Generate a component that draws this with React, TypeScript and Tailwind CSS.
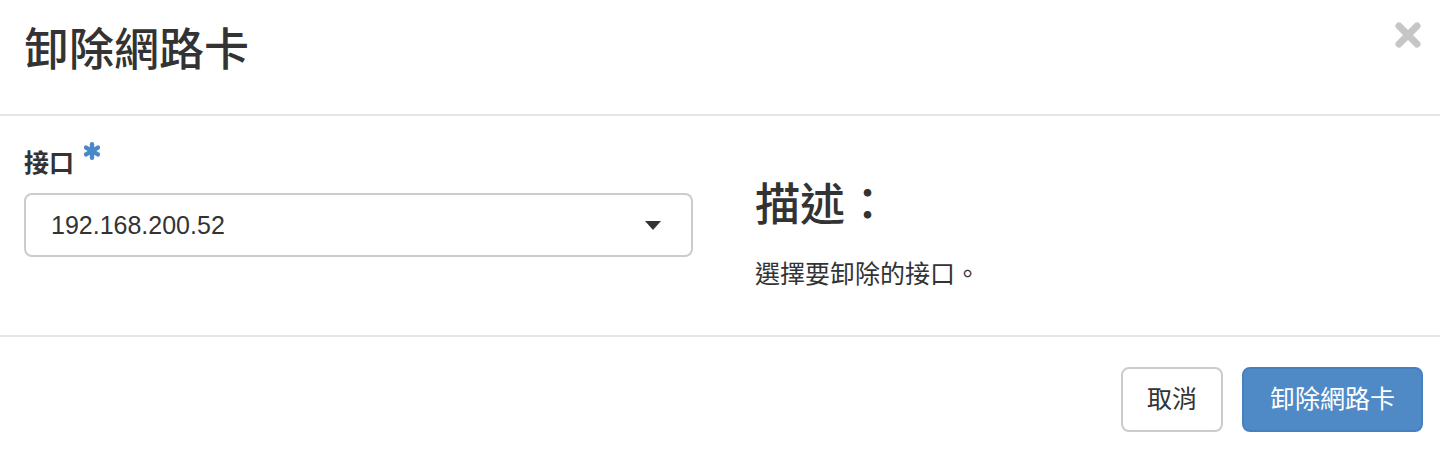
import React from 'react';

const font = { fontFamily: '"Liberation Sans", "Noto Sans CJK TC", sans-serif' };

const Asterisk = () => (
  <svg width="18" height="18" viewBox="0 0 18 18" className="block">
    <g stroke="#4a88c8" strokeWidth="4.4" strokeLinecap="round">
      <line x1="9" y1="2.2" x2="9" y2="15.8" />
      <line x1="3.1" y1="5.6" x2="14.9" y2="12.4" />
      <line x1="3.1" y1="12.4" x2="14.9" y2="5.6" />
    </g>
  </svg>
);

const CloseIcon = () => (
  <svg width="28" height="28" viewBox="0 0 28 28">
    <g stroke="#c6c6c6" strokeWidth="7" strokeLinecap="round">
      <line x1="5" y1="5" x2="23" y2="23" />
      <line x1="23" y1="5" x2="5" y2="23" />
    </g>
  </svg>
);

export default function App() {
  return (
    <div className="w-[1440px] h-[450px] bg-white text-[#333] overflow-hidden" style={font}>
      {/* header */}
      <div className="h-[116px] flex items-start justify-between pl-[24px] pr-[18px] pt-[26px] border-b-2 border-[#e5e5e5]">
        <h4 className="text-[45px] leading-[50px] font-medium m-0">卸除網路卡</h4>
        <button className="mt-[-5px]">
          <CloseIcon />
        </button>
      </div>

      {/* body */}
      <div className="h-[219px] flex pl-[24px] pt-[29px]">
        <div className="w-[669px]">
          <label className="flex items-start gap-[9px] text-[25px] leading-[36px] font-bold">
            <span>接口</span>
            <span className="mt-[-3px]"><Asterisk /></span>
          </label>
          <div className="mt-[12px] h-[64px] border-2 border-[#cccccc] rounded-[8px] flex items-center justify-between pl-[25px] pr-[30px]">
            <span className="text-[25px] mt-[2px]">192.168.200.52</span>
            <svg width="16" height="9" viewBox="0 0 16 9">
              <path d="M0 0 L16 0 L8 9 Z" fill="#333" />
            </svg>
          </div>
        </div>
        <div className="ml-[62px] pt-[36px]">
          <h3 className="text-[45px] leading-[50px] font-medium">描述：</h3>
          <p className="mt-[25px] text-[25px] leading-[36px]">選擇要卸除的接口。</p>
        </div>
      </div>

      {/* footer */}
      <div className="border-t-2 border-[#e5e5e5] flex justify-end gap-[19px] pr-[17px] pt-[30px]">
        <button className="h-[65px] px-[24px] border-2 border-[#cccccc] rounded-[8px] bg-white text-[25px] text-[#333]">
          取消
        </button>
        <button className="h-[65px] px-[26px] border-2 border-[#4680bf] rounded-[8px] bg-[#4f8ac7] text-[25px] text-white">
          卸除網路卡
        </button>
      </div>
    </div>
  );
}
